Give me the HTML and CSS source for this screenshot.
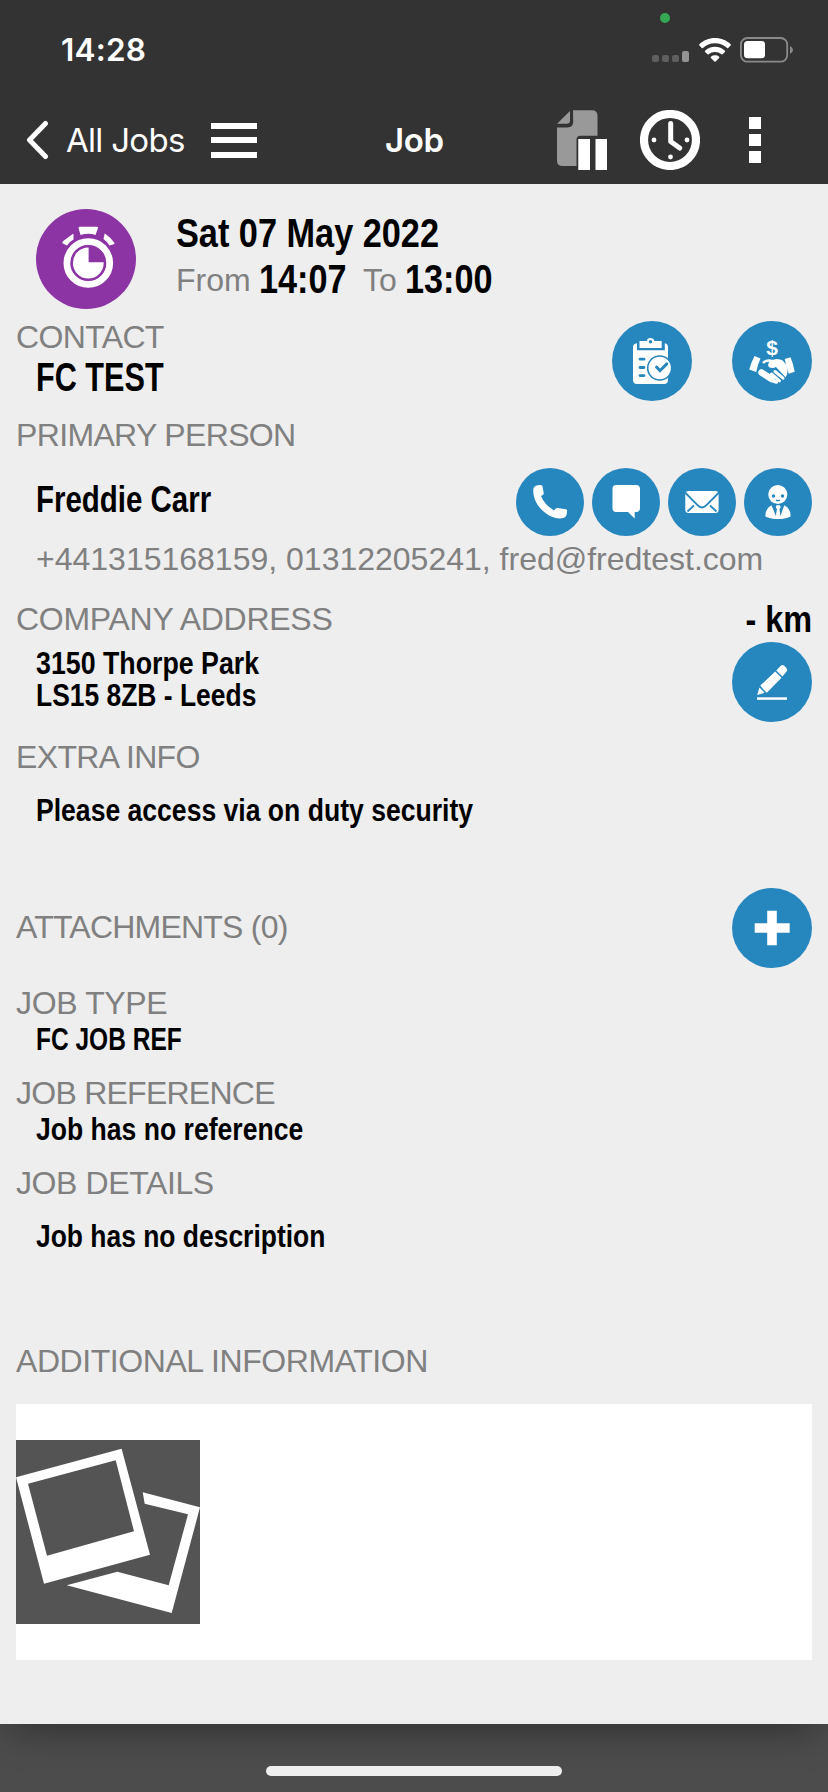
FILE: index.html
```html
<!DOCTYPE html>
<html lang="en">
<head>
<meta charset="utf-8">
<title>Job</title>
<link rel="stylesheet" href="styles.css">
</head>
<body>
<div class="screen">
  <header class="header">
    <div class="status">
      <span class="clock">14:28</span>
      <span class="cam-dot"></span>
      <div class="status-icons">
        <svg width="37" height="26" viewBox="0 0 37 26"><g fill="#5f5f5f"><rect x="0" y="18" width="7" height="7" rx="2"/><rect x="10" y="18" width="7" height="7" rx="2"/><rect x="20" y="18" width="7" height="7" rx="2"/></g><rect x="30" y="14" width="7" height="11" rx="2" fill="#949494"/></svg>
        <svg class="wifi" width="32" height="26" viewBox="0 0 32 26"><path fill="#fff" d="M16 1c6.200 0 11.700 2.400 15.600 6.200q.6.700 0 1.400l-2.300 2.300q-.6.500-1.200 0A17.500 17.500 0 0 0 16 6.200 17.500 17.500 0 0 0 3.900 10.900q-.6.500-1.200 0L.4 8.600q-.6-.7 0-1.400C4.300 3.400 9.800 1 16 1zm0 8.800c3.900 0 7.300 1.500 9.900 3.900q.6.600 0 1.300l-2.300 2.300q-.6.500-1.200 0A9.500 9.500 0 0 0 16 14.900a9.500 9.500 0 0 0-6.400 2.400q-.6.500-1.200 0L6.100 15q-.6-.7 0-1.300c2.600-2.400 6-3.900 9.900-3.900zm0 8.500c1.600 0 3 .5 4.100 1.400q.6.600 0 1.300l-3.500 3.600q-.6.500-1.200 0L11.900 21q-.6-.7 0-1.300a6.500 6.500 0 0 1 4.100-1.400z"/></svg>
        <svg width="54" height="26" viewBox="0 0 54 26"><rect x=".9" y="1" width="46.300" height="23.700" rx="6.500" fill="none" stroke="#8a8a8a" stroke-width="1.800"/><rect x="4" y="4" width="21" height="17.300" rx="3.500" fill="#fff"/><path d="M50 9q3 1.500 3 4t-3 4z" fill="#8a8a8a"/></svg>
      </div>
    </div>
    <nav class="nav">
      <svg class="chevron" width="24" height="40" viewBox="0 0 24 40"><path d="M19.500 3.500 3.500 20l16 16.500" fill="none" stroke="#fff" stroke-width="5" stroke-linecap="round" stroke-linejoin="round"/></svg>
      <span class="back">All Jobs</span>
      <span class="menu"><i></i><i></i><i></i></span>
      <span class="title">Job</span>
      <svg class="doc" width="50" height="60" viewBox="0 0 50 60"><path fill="#999" d="M0 13.800 13 1v9.500q0 3.300-3.300 3.300zM16 .3h19q5.500 0 5.500 5.500v20H23.500q-4 0-4 4V56H5.500Q0 56 0 50.500V17.500h10.500q5.700 0 5.700-5.700z"/><path fill="#fff" d="M21.300 29H33v31H21.300zM38.500 29H50v31H38.500z"/></svg>
      <svg class="watch" width="60" height="60" viewBox="0 0 60 60"><circle cx="30" cy="30" r="26" fill="none" stroke="#fff" stroke-width="8.200"/><path d="M30.700 13.500v18l9 6.500" fill="none" stroke="#fff" stroke-width="5" stroke-linecap="round" stroke-linejoin="round"/><circle cx="14" cy="30" r="2.400" fill="#fff"/><circle cx="47" cy="30" r="2.400" fill="#fff"/><circle cx="30.500" cy="47" r="2.400" fill="#fff"/></svg>
      <span class="more"><i></i><i></i><i></i></span>
    </nav>
  </header>

  <main class="main">
    <section class="summary">
      <svg class="badge" width="100" height="100" viewBox="0 0 100 100"><circle cx="50" cy="50" r="50" fill="#8d34a5"/><g fill="#fff"><path d="M42.500 19q.2-1.300 1.500-1.300h17q1.300 0 1 1.300L59.500 26q-7-2.300-15 0zM36 25.500q1.500-1.500 1.500.5v4.500q-4.500 2.500-6.500 6l-4.500-2.200q-.5-.8.500-2zM68.500 25.500q-.5-1.200.7-.7 5.800 4 9.300 9.200.3 1-.7 1.200l-4.300 1.300q-2-3.500-6-6.500z"/><circle cx="52.300" cy="54" r="17"/></g><circle cx="52.300" cy="54" r="21.200" fill="none" stroke="#fff" stroke-width="7.200"/><circle cx="52.300" cy="54" r="16.700" fill="none" stroke="#8d34a5" stroke-width="2.600"/><path d="M52.600 37.700a16 16 0 0 1 15.700 15.500H52.600z" fill="#8d34a5"/></svg>
      <div class="when">
        <div class="xl"><span class="nar w-date">Sat 07 May 2022</span></div>
        <div class="times"><span class="grey">From</span><span class="xl nar w-from">14:07</span><span class="grey to">To</span><span class="xl nar w-to">13:00</span></div>
      </div>
    </section>

    <section class="row contact">
      <div>
        <h2 class="label">CONTACT</h2>
        <div class="xl indent"><span class="nar w-contact">FC TEST</span></div>
      </div>
      <div class="actions wide">
        <svg class="round" width="80" height="80" viewBox="0 0 80 80"><circle cx="40" cy="40" r="40" fill="#2687bf"/><path fill="#fff" d="M25 22.300v7h27.800v-7q3.200.5 3.200 4V59q0 4-4 4H25q-4 0-4-4V26.500q0-3.800 4-4.200z"/><path fill="#fff" d="M27.500 20h7.300q.5-3 3.700-3t3.900 3h7.300v7H27.500z"/><circle cx="38.500" cy="20.800" r="1.700" fill="#2687bf"/><path d="M28 38.200h4M28 46.500h4M28 54.600h4" stroke="#2687bf" stroke-width="2.800" stroke-linecap="round"/><circle cx="47.700" cy="47" r="12" fill="#fff" stroke="#2687bf" stroke-width="1.600"/><path d="m44.600 46 3.400 3.700 6.800-6.800" fill="none" stroke="#2687bf" stroke-width="3" stroke-linecap="round"/></svg>
        <svg class="round" width="80" height="80" viewBox="0 0 80 80"><circle cx="40" cy="40" r="40" fill="#2687bf"/><text x="40.200" y="34" text-anchor="middle" class="dollar">$</text><g fill="#fff"><path d="m22.500 35 6 2.500q-3 6.500-4.300 13.500l-7-2.500q2-7 5.300-13.500zM52.800 38l5.700-1.800q3 7 4.200 14.500l-5.900 2q-3-7-4-14.700z"/><path d="M37.300 40.700q3.500-2.700 7.400-2.700 3.600 0 6 1.500 3.300 2.800 4.300 7.500 1.300 6-1.500 9.200L44 46q-3.500 1.700-6.800.2-2.200-1.700.1-5.500z"/></g><path d="M31.800 41.200q3.700-2.700 8.200-1.200" fill="none" stroke="#fff" stroke-width="2.600" stroke-linecap="round"/><g fill="none" stroke="#fff" stroke-linecap="round"><path d="m29.500 51.500 10 6.500" stroke-width="6.500"/><path d="m41.500 60 3 1" stroke-width="3.500"/><path d="m39.500 53 8 6.800M43 50.500l8 6.700" stroke-width="3"/></g></svg>
      </div>
    </section>

    <h2 class="label primary">PRIMARY PERSON</h2>
    <section class="row person">
      <div class="lg indent"><span class="nar w-person">Freddie Carr</span></div>
      <div class="actions">
        <svg class="round" width="68" height="68" viewBox="0 0 68 68"><circle cx="34" cy="34" r="34" fill="#2687bf"/><path fill="#fff" d="M17.500 20q2-3.500 8-2.800.8.300 1 1.300l1.300 7q-.4 1.600-2.800 2.600 3.500 9 13 14.300 1.700-2.600 3.600-2.400l8.300 1.200q1.300.3 1.200 1.800-.1 6-3.700 7.100C34.500 53.500 15 37 17.500 20z"/></svg>
        <svg class="round" width="68" height="68" viewBox="0 0 68 68"><circle cx="34" cy="34" r="34" fill="#2687bf"/><path fill="#fff" d="M24 17h20q4 0 4 4v19q0 4-4 4h-1.300v6.500L36 44H24q-3.500 0-3.500-4V21q0-4 3.500-4z"/></svg>
        <svg class="round" width="68" height="68" viewBox="0 0 68 68"><circle cx="34" cy="34" r="34" fill="#2687bf"/><rect x="17.300" y="23" width="33.300" height="22" rx="3.300" fill="#fff"/><path d="m17 24.500 12.500 12.700q4.500 4.500 9 0L51 24.500M19.500 43.500l6.500-6M48.500 43.500l-6.500-6" fill="none" stroke="#2687bf" stroke-width="1.800"/></svg>
        <svg class="round" width="68" height="68" viewBox="0 0 68 68"><circle cx="34" cy="34" r="34" fill="#2687bf"/><circle cx="33.800" cy="26.500" r="9.500" fill="#fff"/><g fill="#2687bf"><circle cx="29.500" cy="28" r="1.700"/><circle cx="38.500" cy="28" r="1.700"/></g><path d="M32 32.200q2 1 4 0" fill="none" stroke="#2687bf" stroke-width="1.300"/><path fill="#fff" d="m27.500 37.200 4.500 11 1-7-1.200-2 .7-2H36l.7 2-1.200 2 .8 7 4-11q6 2.500 6.400 11-4.500 2.800-12.700 2.800T21.300 48.200q.4-8.500 6.200-11zM32.800 42h1.900l.8 4.500-1.700 3-1.800-3z"/></svg>
      </div>
    </section>
    <div class="grey indent coords">+441315168159, 01312205241, fred@fredtest.com</div>

    <section class="row address">
      <div>
        <h2 class="label l-company">COMPANY ADDRESS</h2>
        <address class="md indent"><span class="nar w-addr1">3150 Thorpe Park</span><span class="nar w-addr2">LS15 8ZB - Leeds</span></address>
      </div>
      <div class="distance">
        <span class="lg nar w-km">- km</span>
        <svg class="round" width="80" height="80" viewBox="0 0 80 80"><circle cx="40" cy="40" r="40" fill="#2687bf"/><g fill="#fff"><path d="m25.200 53 2.200-7.500 5.200 5.200z"/><path d="m28.300 43.500 14.900-14 6.300 6.300-14.700 15q-3.500-3.200-6.500-7.300z"/><path d="m44.300 28.500 4.300-4.600q1.600-1.800 3.400-.3l2.500 2.500q1.500 1.700.1 3.300l-4.200 5z"/><rect x="25" y="55.300" width="30" height="2.500"/></g></svg>
      </div>
    </section>

    <h2 class="label extra">EXTRA INFO</h2>
    <div class="md indent extra-text"><span class="nar w-extra">Please access via on duty security</span></div>

    <section class="row attachments">
      <h2 class="label l-attach">ATTACHMENTS (0)</h2>
      <svg class="round" width="80" height="80" viewBox="0 0 80 80"><circle cx="40" cy="40" r="40" fill="#2687bf"/><path d="M22.700 40h35M40 22.700v34.600" stroke="#fff" stroke-width="9.600"/></svg>
    </section>

    <section class="field">
      <h2 class="label l-type">JOB TYPE</h2>
      <div class="md indent"><span class="nar w-type">FC JOB REF</span></div>
    </section>
    <section class="field">
      <h2 class="label l-ref">JOB REFERENCE</h2>
      <div class="md indent"><span class="nar w-ref">Job has no reference</span></div>
    </section>
    <section class="field details">
      <h2 class="label l-details">JOB DETAILS</h2>
      <div class="md indent"><span class="nar w-desc">Job has no description</span></div>
    </section>

    <h2 class="label additional">ADDITIONAL INFORMATION</h2>
    <div class="gallery">
      <svg class="tile" width="184" height="184" viewBox="0 0 184 184"><path fill="#545454" d="M0 0h184v184H0z"/><path fill="#fff" fill-rule="evenodd" d="M0 37.300 105.600 8.700 134 114.700 28 143.700zM12 43.700 31 115.700 118 91.300 99.700 20.300z"/><path fill="#fff" d="m126.700 52.300 57.300 15-28.300 105.700L50.700 145.300l50.600-13.600 51.400 13.600 19.300-71-43.300-10.600z"/></svg>
    </div>
  </main>
  <footer class="footer"><span class="home"></span></footer>
</div>
</body>
</html>
```
FILE: styles.css
```css
* { box-sizing: border-box; }
body { margin: 0; background: #4c4c4c; font-family: "Liberation Sans", Arial, sans-serif; }
svg { display: block; flex: none; }
h2, address { margin: 0; font-style: normal; }
.screen { width: 828px; height: 1792px; display: flex; flex-direction: column; overflow: hidden; }

.header { height: 184px; background: #333; color: #fff; font-family: Inter, sans-serif; flex: none; position: relative; z-index: 2; }
.status { height: 97px; padding: 3px 34px 0 61px; display: flex; justify-content: space-between; align-items: center; position: relative; }
.clock { font-size: 31.500px; font-weight: 600; line-height: 36px; letter-spacing: .2px; }
.cam-dot { position: absolute; left: 660px; top: 13px; width: 10px; height: 10px; border-radius: 50%; background: #34a853; }
.status-icons { display: flex; }
.wifi { margin: 0 9.500px; }
.nav { height: 86px; display: flex; align-items: center; padding-left: 26px; }
.back { width: 120px; margin: 0 24px 0 16px; font-size: 33px; line-height: 40px; white-space: nowrap; letter-spacing: -.7px; }
.menu { display: flex; flex-direction: column; gap: 8.500px; width: 46px; margin-left: 1px; }
.menu i { height: 6px; background: #fff; }
.title { margin-left: 128px; width: 60px; font-size: 33px; font-weight: 600; line-height: 40px; letter-spacing: -.3px; }
.doc { margin-left: 112px; }
.watch { margin-left: 33px; }
.more { margin-left: 49px; display: flex; flex-direction: column; gap: 5px; }
.more i { width: 12px; height: 12px; background: #fff; }

.main { height: 1540px; flex: none; background: #eee; padding: 25px 16px 0; position: relative; box-shadow: 0 14px 38px -10px rgba(0, 0, 0, .4); }
.nar { display: inline-block; transform-origin: 0 50%; white-space: nowrap; }
.xl, .lg, .md { font-weight: 700; color: #000; }
.xl { font-size: 40px; line-height: 44px; }
.lg { font-size: 36px; line-height: 40px; }
.md { font-size: 32px; line-height: 36px; }
.grey, .label { font-size: 32px; line-height: 36px; font-weight: 400; color: #808080; white-space: nowrap; }
.label { letter-spacing: -.65px; }
.l-company { letter-spacing: -.28px; }
.l-attach { letter-spacing: -.78px; }
.l-type { letter-spacing: -.35px; }
.l-ref { letter-spacing: -.75px; }
.l-details { letter-spacing: -.4px; }
.indent { padding-left: 20px; }
.row { display: flex; justify-content: space-between; }
.actions { display: flex; gap: 8px; }
.actions.wide { gap: 40px; }
.dollar { font: 700 21px "Liberation Sans", sans-serif; fill: #fff; }

.summary { display: flex; height: 110px; padding-left: 20px; }
.when { margin-left: 40px; padding-top: 2px; }
.times { display: flex; align-items: baseline; margin-top: 2px; }
.times .grey { width: 83px; transform: translateY(-2.500px); }
.times .to { width: 42px; }
.w-date { transform: scaleX(.857); }
.w-from { transform: scaleX(.855); width: 104px; }
.w-to { transform: scaleX(.855); }
.w-contact { transform: scaleX(.766); }
.w-person { transform: scaleX(.818); }
.w-addr1 { transform: scaleX(.836); }
.w-addr2 { transform: scaleX(.826); }
.w-extra { transform: scaleX(.83); }
.w-type { transform: scaleX(.766); }
.w-ref { transform: scaleX(.83); }
.w-desc { transform: scaleX(.826); }
.w-km { transform: scaleX(.9); transform-origin: 100% 50%; }

.contact { height: 98px; }
.contact .actions { padding-top: 2px; }
.primary { height: 51px; }
.person { height: 73px; }
.person .lg { padding-top: 12px; }
.coords { height: 60px; }
.address { height: 138px; }
.address address { display: flex; flex-direction: column; align-items: flex-start; line-height: 32px; padding-top: 10px; }
.distance { display: flex; flex-direction: column; align-items: flex-end; }
.distance .nar { height: 41px; line-height: 38px; }
.extra { height: 53px; }
.extra-text { height: 96px; }
.attachments { height: 97px; align-items: flex-start; }
.attachments .label { padding-top: 21px; }
.field { height: 90px; }
.details { height: 178px; }
.details .label { height: 53px; }
.additional { height: 61px; letter-spacing: -.43px; }
.gallery { background: #fff; padding: 36px 0; height: 256px; }

.footer { flex: 1; display: flex; justify-content: center; padding-top: 42px; }
.home { width: 296px; height: 10px; border-radius: 5px; background: #eee; position: relative; }
```
